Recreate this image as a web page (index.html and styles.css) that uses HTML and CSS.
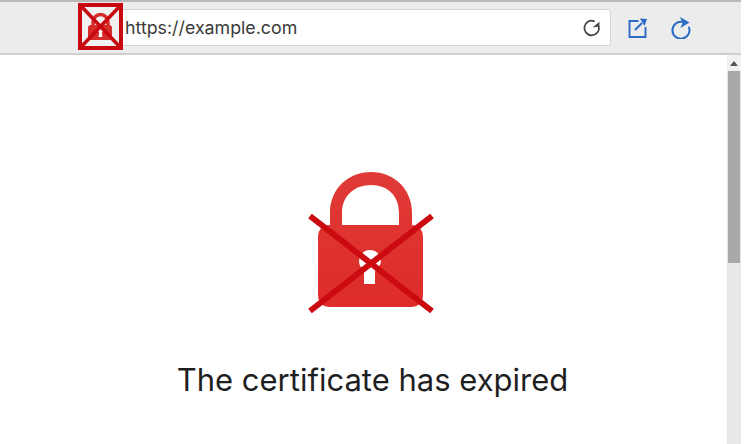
FILE: index.html
```html
<!DOCTYPE html>
<html lang="en">
<head>
<meta charset="utf-8">
<title>The certificate has expired</title>
<link rel="stylesheet" href="styles.css">
</head>
<body>
<div class="window">
  <header class="toolbar">
    <svg class="favicon" viewBox="0 0 45 47" width="45" height="47" aria-hidden="true">
      <rect x="0" y="0" width="45" height="47" fill="#c8090f"/>
      <rect x="4" y="4" width="37" height="39" fill="#f1f1f1"/>
      <path d="M15 24v-5a7.500 7.500 0 0 1 15 0v5" fill="none" stroke="#d62c2c" stroke-width="3.500"/>
      <rect x="10" y="22" width="24" height="15" rx="3" fill="#d62c2c"/>
      <path d="M22.500 25a2.500 2.500 0 0 1 1.300 4.600l.6 4.400h-3.800l.6-4.400a2.500 2.500 0 0 1 1.300-4.600z" fill="#fff"/>
      <path d="M3 3l39 41M42 3L3 44" stroke="#c8090f" stroke-width="3.500"/>
    </svg>
    <div class="address">
      <span class="url">https://example.com</span>
      <svg class="reload" viewBox="0 0 20 20" width="20" height="20" aria-hidden="true">
        <path d="M16.800 8.500A7.300 7.300 0 1 1 12 3.100" fill="none" stroke="#444" stroke-width="1.800" stroke-linecap="round"/>
        <path d="M10.500 9.500L17.500 3.800l-.3 4.800z" fill="#444"/>
      </svg>
    </div>
    <svg class="tool" viewBox="0 0 20 22" width="20" height="22" aria-hidden="true">
      <path d="M10.500 4H1.500v16h16V10" fill="none" stroke="#2a6bc4" stroke-width="1.900"/>
      <path d="M7 13l7-7" fill="none" stroke="#2a6bc4" stroke-width="1.900"/>
      <path d="M12 1.500l7 .5-2.500 7z" fill="#2a6bc4"/>
    </svg>
    <svg class="tool" viewBox="0 0 20 22" width="20" height="22" aria-hidden="true">
      <path d="M18 10.500A8.500 8.500 0 1 1 11 4.800" fill="none" stroke="#2a6bc4" stroke-width="2" stroke-linecap="round"/>
      <path d="M9 0L18.500 5.500 9.500 11l2-5.200z" fill="#2a6bc4"/>
    </svg>
  </header>
  <div class="viewport">
    <main class="content">
      <svg class="lock" viewBox="0 0 126 142" width="126" height="142" aria-hidden="true">
        <defs>
          <linearGradient id="lockfill" x1="0" y1="0" x2="0" y2="1">
            <stop offset="0" stop-color="#e03a36"/>
            <stop offset="1" stop-color="#de2c2a"/>
          </linearGradient>
        </defs>
        <path fill-rule="evenodd" fill="url(#lockfill)" d="M22 53V41C22 17 40 0 63 0s41 17 41 41v12h-1c7 0 12 4 12 12v58c0 8-5 12-12 12H22c-7 0-12-4-12-12V65c0-8 5-12 12-12zM34 53h57V41C91 24 80 13 63 13S34 24 34 41z"/>
        <path fill="#fff" d="M62 78a11 11 0 0 1 11 11c0 3-2 6-5 8l-1 3v12H56v-12l-1-3c-3-2-4-5-4-8a11 11 0 0 1 11-11z"/>
        <path d="M2 44L124 139M124 44L2 139" stroke="#cc0b10" stroke-width="6"/>
      </svg>
      <h1 class="title">The certificate has expired</h1>
    </main>
    <div class="scrollbar">
      <div class="arrow"></div>
      <div class="thumb"></div>
    </div>
  </div>
</div>
</body>
</html>
```
FILE: styles.css
```css
* { box-sizing: border-box; }
html, body { margin: 0; padding: 0; background: #fff; }
body { width: 745px; height: 444px; overflow: hidden; font-family: Inter, "Liberation Sans", sans-serif; color: #222; }
.window { width: 741px; height: 444px; display: flex; flex-direction: column; }
.toolbar {
  height: 55px; flex: none; display: flex; align-items: center;
  padding: 1px 0 0 78px;
  background: #ececec; border-top: 2px solid #b9b9b9; border-bottom: 2px solid #cfcfcf;
}
.favicon { flex: none; position: relative; z-index: 1; margin-top: -3px; }
.address {
  flex: none; width: 491px; height: 37px; margin-left: -3px; padding: 0 8px 0 4px;
  display: flex; align-items: center; justify-content: space-between;
  background: #fff; border: 1px solid #d4d4d4; border-radius: 3px; margin-top: -1px;
}
.url { font-size: 17.800px; color: #3a3a3a; }
.reload { flex: none; }
.tool { flex: none; margin-left: 17px; }
.tool + .tool { margin-left: 23px; }
.viewport { flex: 1; display: flex; min-height: 0; }
.content { flex: 1; display: flex; flex-direction: column; align-items: center; padding: 117px 0 0 18px; }
.lock { flex: none; margin-right: 3px; }
.title { margin: 46px 0 0; font-size: 31px; line-height: 40px; font-weight: 400; color: #1f1f1f; }
.scrollbar { flex: none; width: 14px; background: #e9e9e9; display: flex; flex-direction: column; }
.arrow { height: 16px; background: #f2f2f2; display: flex; align-items: center; justify-content: center; }
.arrow::before { content: ""; border: 4px solid transparent; border-top: 0; border-bottom: 5px solid #555; }
.thumb { height: 192px; margin: 0 1px; background: #a9a9a9; }
```
